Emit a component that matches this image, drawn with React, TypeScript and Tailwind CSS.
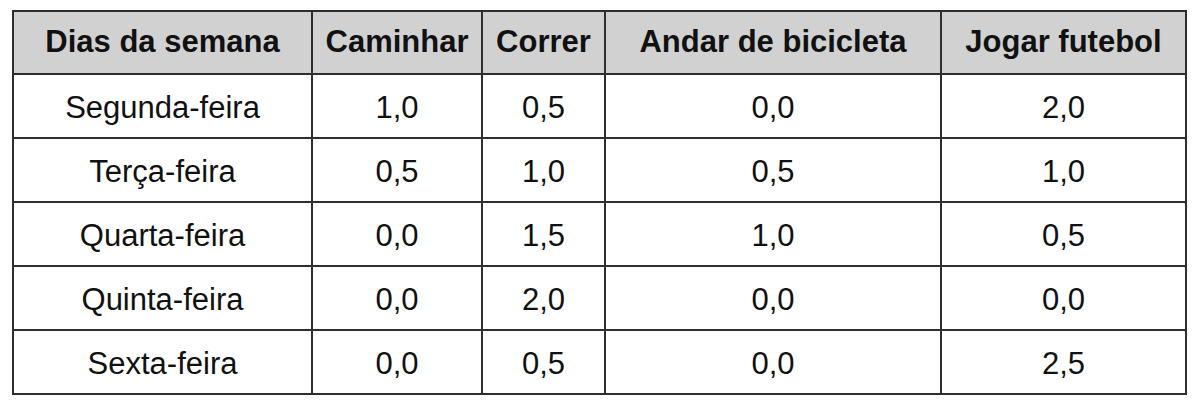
import React from 'react';

const HEADERS = ['Dias da semana', 'Caminhar', 'Correr', 'Andar de bicicleta', 'Jogar futebol'];
const WIDTHS = ['w-[299px]', 'w-[170px]', 'w-[123px]', 'w-[336px]', 'w-[245px]'];

const ROWS = [
  ['Segunda-feira', '1,0', '0,5', '0,0', '2,0'],
  ['Terça-feira', '0,5', '1,0', '0,5', '1,0'],
  ['Quarta-feira', '0,0', '1,5', '1,0', '0,5'],
  ['Quinta-feira', '0,0', '2,0', '0,0', '0,0'],
  ['Sexta-feira', '0,0', '0,5', '0,0', '2,5'],
];

export default function App() {
  return (
    <div className="w-[1200px] h-[401px] bg-white pt-[10px] pl-[12px]" style={{ fontFamily: '"Liberation Sans", Arial, sans-serif' }}>
      {/* Activity table */}
      <table className="table-fixed border-collapse border-2 border-[#2e2e2e] text-[#111] text-[31px]">
        <colgroup>
          {WIDTHS.map((w, i) => (
            <col key={i} className={w} />
          ))}
        </colgroup>
        <thead>
          <tr className="h-[63px] bg-[#d1d1d1]">
            {HEADERS.map((h) => (
              <th key={h} className="border-2 border-[#2e2e2e] font-bold text-center whitespace-nowrap">
                {h}
              </th>
            ))}
          </tr>
        </thead>
        <tbody>
          {ROWS.map((row) => (
            <tr key={row[0]} className="h-[64px]">
              {row.map((cell, i) => (
                <td key={i} className="border-2 border-[#2e2e2e] text-center pt-[4px]">
                  {cell}
                </td>
              ))}
            </tr>
          ))}
        </tbody>
      </table>
    </div>
  );
}
